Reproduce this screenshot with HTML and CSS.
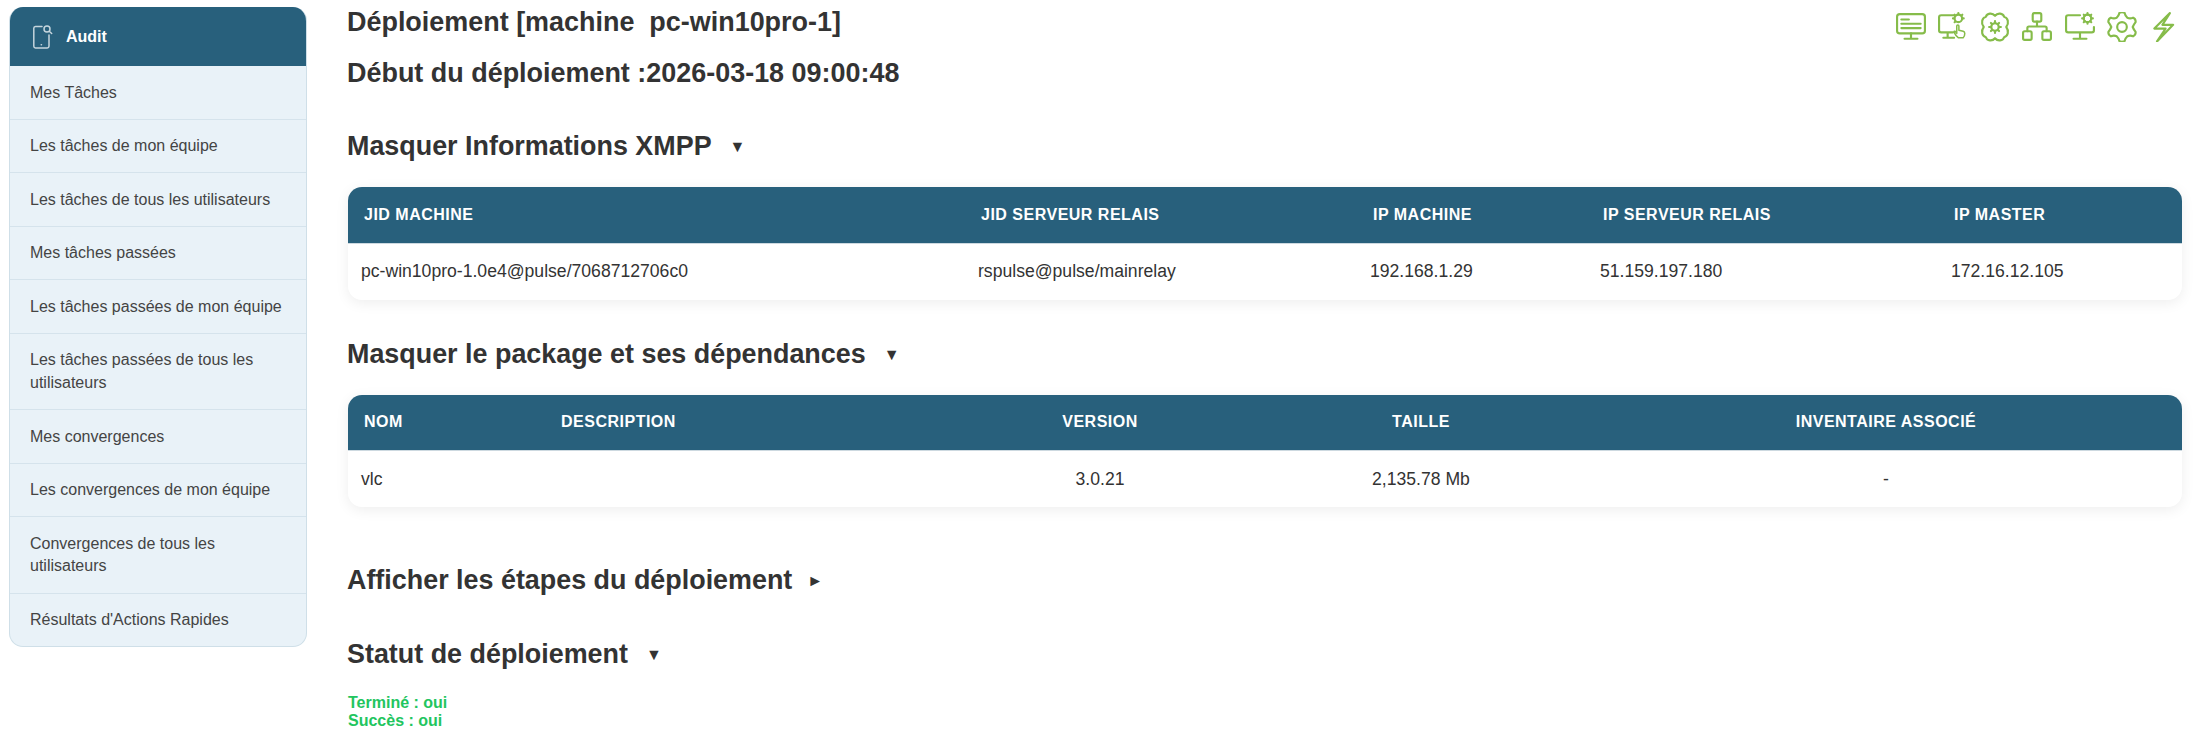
FILE: index.html
```html
<!DOCTYPE html>
<html lang="fr">
<head>
<meta charset="utf-8">
<title>Audit</title>
<link rel="stylesheet" href="styles.css">
</head>
<body>
<div class="page">
  <aside class="sidebar">
    <div class="side-head">
      <svg class="side-icon" viewBox="0 0 20 24" fill="none" stroke="currentColor" stroke-width="1.5" stroke-linecap="round" stroke-linejoin="round"><path d="M9 1.500H2.500A1.800 1.800 0 0 0 .8 3.300v18A1.800 1.800 0 0 0 2.500 23h11.700a1.800 1.800 0 0 0 1.800-1.700V10"/><circle cx="14" cy="4" r="3"/><path d="M16.500 6.500l2.200 2M8.200 19.800h.3"/></svg>
      <span>Audit</span>
    </div>
    <ul class="side-list">
      <li>Mes Tâches</li>
      <li>Les tâches de mon équipe</li>
      <li>Les tâches de tous les utilisateurs</li>
      <li>Mes tâches passées</li>
      <li>Les tâches passées de mon équipe</li>
      <li>Les tâches passées de tous les utilisateurs</li>
      <li>Mes convergences</li>
      <li>Les convergences de mon équipe</li>
      <li>Convergences de tous les utilisateurs</li>
      <li>Résultats d'Actions Rapides</li>
    </ul>
  </aside>
  <main class="content">
    <div class="top">
      <div>
        <h2 class="title">Déploiement [machine&nbsp; pc-win10pro-1]</h2>
        <h2 class="title start">Début du déploiement :2026-03-18 09:00:48</h2>
      </div>
      <div class="icons">
        <svg viewBox="0 0 28 28"><rect x="1" y="2" width="26" height="18" rx="2.500"/><path d="M5 7h7M5 11h18M5 15h18M14 20v5M8 25h12"/></svg>
        <svg viewBox="0 0 28 28"><path d="M15 3H3a2 2 0 0 0-2 2v12a2 2 0 0 0 2 2h11M9 19v5M5 24h10"/><circle cx="19" cy="6" r="3.500"/><path d="M19 1v1M14 6h1M23 6h1M15.500 2.500l.7.7M15.500 9.500l.7-.7M22 3.200l.7-.7"/><path class="thin" d="M19 24c-2-1-3-3-4-5-.5-1 1-1.500 1.500-.5l1 1.500v-7c0-1.300 2-1.300 2 0v4l4 1c1 .3 1.500 1 1.500 2 0 2-.5 3-1.500 4z"/></svg>
        <svg viewBox="0 0 28 28"><path d="M14 3.500C11.500 .5 6.500 1 5.500 4.500 2 5.500 .5 10 3.500 14 .5 18 2 22.500 5.500 23.500 6.500 27 11.500 27.500 14 24.500 16.500 27.500 21.500 27 22.500 23.500 26 22.500 27.500 18 24.500 14 27.500 10 26 5.500 22.500 4.500 21.500 1 16.500 .5 14 3.500Z"/><circle cx="14" cy="14" r="3.500"/><path d="M14 8.500v2M14 17.500v2M8.500 14h2M17.500 14h2M10.200 10.200l1.300 1.300M16.500 16.500l1.300 1.300M10.200 17.800l1.300-1.300M16.500 11.500l1.300-1.300"/></svg>
        <svg viewBox="0 0 28 28"><rect x="10" y="1" width="8" height="8" rx="1.500"/><rect x="1" y="18" width="8" height="8" rx="1.500"/><rect x="19" y="18" width="8" height="8" rx="1.500"/><path d="M14 9v4.500M5 18v-3a1.500 1.500 0 0 1 1.500-1.500h15A1.500 1.500 0 0 1 23 15v3"/></svg>
        <svg viewBox="0 0 28 28"><path d="M14 3H3a2 2 0 0 0-2 2v12a2 2 0 0 0 2 2h22a2 2 0 0 0 2-2v-3M14 19v6M8 25h12"/><circle cx="21" cy="6" r="3.500"/><path d="M21 1v1.500M21 9.500V11M16 6h1.500M24.500 6H26M17.500 2.500l1 1M23.500 8.500l1 1M17.500 9.500l1-1M23.500 3.500l1-1"/></svg>
        <svg viewBox="0 0 28 28"><path d="M11.660 .7Q14 -.3 16.340 .7Q17 3.500 19 5.340Q21.500 6.500 24.340 5.320Q27 6.500 26.690 9.380Q25 11.500 24 14Q25 16.500 26.690 18.620Q27 21.500 24.340 22.680Q21.500 21.500 19 22.660Q17 24.500 16.340 27.300Q14 28.300 11.660 27.300Q11 24.500 9 22.660Q6.500 21.500 3.660 22.680Q1 21.500 1.310 18.620Q3 16.500 4 14Q3 11.500 1.310 9.380Q1 6.500 3.660 5.320Q6.500 6.500 9 5.340Q11 3.500 11.660 .7Z"/><circle cx="14" cy="14" r="4.500"/></svg>
        <svg viewBox="0 0 28 28"><path d="M19.500 1L5 15.500H15.500L7.500 27.500L22.500 12H12.500Z"/></svg>
      </div>
    </div>

    <h3 class="section first">Masquer Informations XMPP<span class="caret">▼</span></h3>
    <div class="card">
      <table class="xmpp">
        <thead>
          <tr><th>JID Machine</th><th>JID Serveur Relais</th><th>IP Machine</th><th>IP Serveur Relais</th><th>IP Master</th></tr>
        </thead>
        <tbody>
          <tr><td>pc-win10pro-1.0e4@pulse/7068712706c0</td><td>rspulse@pulse/mainrelay</td><td>192.168.1.29</td><td>51.159.197.180</td><td>172.16.12.105</td></tr>
        </tbody>
      </table>
    </div>

    <h3 class="section second">Masquer le package et ses dépendances<span class="caret">▼</span></h3>
    <div class="card">
      <table class="pkg">
        <thead>
          <tr><th>Nom</th><th>Description</th><th class="center">Version</th><th class="center">Taille</th><th class="center">Inventaire associé</th></tr>
        </thead>
        <tbody>
          <tr><td>vlc</td><td></td><td class="center">3.0.21</td><td class="center">2,135.78 Mb</td><td class="center">-</td></tr>
        </tbody>
      </table>
    </div>

    <h3 class="section third">Afficher les étapes du déploiement<span class="caret side">►</span></h3>
    <h3 class="section fourth">Statut de déploiement<span class="caret">▼</span></h3>
    <p class="status">Terminé : oui<br>Succès : oui</p>
  </main>
</div>
</body>
</html>
```
FILE: styles.css
```css
* { box-sizing: border-box; }
html, body { margin: 0; padding: 0; background: #fff; }
body {
  font-family: "Liberation Sans", Arial, sans-serif;
  color: #333;
  height: 729px;
  overflow: hidden;
}
.page {
  display: flex;
  align-items: flex-start;
  gap: 41px;
  padding: 7px 30px 0 9px;
}
.sidebar {
  width: 298px;
  flex: none;
  border-radius: 14px;
  overflow: hidden;
  background: #e9f2f8;
  border: 1px solid #cfdfe8;
  border-top: 0;
}
.side-head {
  display: flex;
  align-items: center;
  gap: 13px;
  height: 59px;
  margin: 0 -1px;
  padding-left: 24px;
  background: #28607c;
  color: #fff;
  font-weight: 700;
  font-size: 16px;
}
.side-icon { width: 20px; height: 24px; color: #c5d5dd; }
.side-list { list-style: none; margin: 0; padding: 0; }
.side-list li {
  padding: 15.5px 20px 14.5px;
  font-size: 16px;
  line-height: 22.6px;
  color: #444;
  border-bottom: 1px solid #d5e3ec;
}
.side-list li:last-child { border-bottom: 0; }
.content { flex: 1; min-width: 0; margin-top: -7px; }
.top { display: flex; justify-content: space-between; align-items: flex-start; }
.title { margin: 0 0 0 -1px; font-size: 26.95px; line-height: 30px; font-weight: 700; color: #333; padding-top: 7px; }
.title.start { padding-top: 21px; }
.icons { display: flex; gap: 12.2px; padding: 12px 3px 0 0; }
.icons svg {
  width: 30px;
  height: 30px;
  fill: none;
  stroke: #86bc4a;
  stroke-width: 2;
  stroke-linecap: round;
  stroke-linejoin: round;
}
.icons svg .thin { stroke-width: 1.4; fill: #fff; }
.section { margin: 0 0 0 -1px; font-size: 26.9px; line-height: 32px; font-weight: 700; color: #333; }
.section.first { margin-top: 42px; }
.section.second { margin-top: 38px; }
.section.third { margin-top: 57px; }
.section.fourth { margin-top: 41px; }
.caret { font-size: 16px; margin-left: 18px; vertical-align: 3px; }
.caret.side { margin-left: 15px; }
.card {
  margin-top: 24px;
  border-radius: 14px;
  overflow: hidden;
  background: #fff;
  box-shadow: 0 3px 14px rgba(0, 0, 0, 0.07);
}
table { width: 100%; border-collapse: collapse; table-layout: fixed; }
th {
  height: 56px;
  padding: 0 16px;
  background: #28607c;
  color: #fff;
  font-size: 16px;
  font-weight: 700;
  text-transform: uppercase;
  letter-spacing: 0.5px;
  text-align: left;
  border-bottom: 1px solid #cdd9e0;
}
td { height: 56.5px; padding: 0 13px; font-size: 17.6px; color: #333; }
.center { text-align: center; }
.xmpp th:nth-child(1) { width: 617px; }
.xmpp th:nth-child(2) { width: 392px; }
.xmpp th:nth-child(3) { width: 230px; }
.xmpp th:nth-child(4) { width: 351px; }
.pkg th:nth-child(1) { width: 197px; }
.pkg th:nth-child(2) { width: 403px; }
.pkg th:nth-child(3) { width: 304px; }
.pkg th:nth-child(4) { width: 338px; }
.status { margin: 23px 0 0; font-size: 16px; line-height: 18.4px; font-weight: 700; color: #22c55e; }
```
